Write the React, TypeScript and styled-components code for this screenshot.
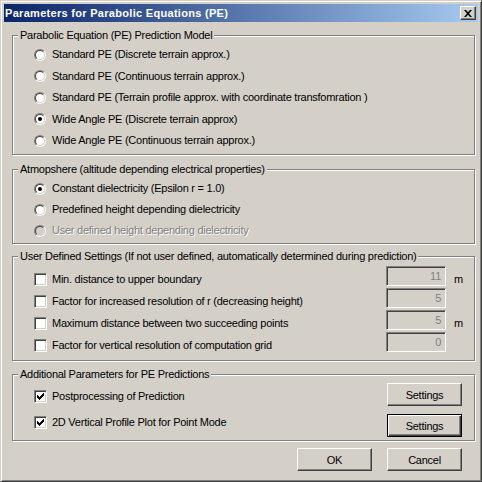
import React from 'react';
import styled, { createGlobalStyle, css } from 'styled-components';

const FACE = '#d4d0c8';
const SHADOW = '#808080';
const DARK = '#404040';

const GlobalStyle = createGlobalStyle`
  html, body { margin: 0; padding: 0; background: ${FACE}; }
  body {
    font-family: 'Liberation Sans', Arial, sans-serif;
    font-size: 11px;
    letter-spacing: -0.25px;
    color: #000;
  }
`;

const Window = styled.div`
  box-sizing: border-box;
  width: 482px;
  height: 482px;
  padding: 3px;
  background: ${FACE};
  border: 1px solid;
  border-color: ${FACE} ${DARK} ${DARK} ${FACE};
  box-shadow: inset 1px 1px 0 #fff, inset -1px -1px 0 ${SHADOW};
  display: flex;
  flex-direction: column;
`;

const TitleBar = styled.div`
  height: 18px;
  flex: none;
  display: flex;
  align-items: center;
  justify-content: space-between;
  padding: 0 2px 0 1px;
  background: linear-gradient(to right, #0a246a, #a6caf0);
`;

const TitleText = styled.span`
  color: #fff;
  font-weight: bold;
  font-size: 11px;
  letter-spacing: 0.3px;
  white-space: nowrap;
`;

const CloseButton = styled.div`
  box-sizing: border-box;
  width: 16px;
  height: 14px;
  background: ${FACE};
  border: 1px solid;
  border-color: #fff ${DARK} ${DARK} #fff;
  box-shadow: inset -1px -1px 0 ${SHADOW};
  display: flex;
  align-items: center;
  justify-content: center;
`;

const Client = styled.div`
  flex: 1;
  display: flex;
  flex-direction: column;
  padding: 0 3px 0 8px;
`;

const Group = styled.div<{ $pad: string; $gap: number }>`
  position: relative;
  margin-top: ${(p) => p.$gap}px;
  padding: ${(p) => p.$pad};
  border: 1px solid ${SHADOW};
  box-shadow: inset 1px 1px 0 #fff, 1px 1px 0 #fff;
  display: flex;
  flex-direction: column;
`;

const Legend = styled.span`
  position: absolute;
  top: -7px;
  left: 5px;
  padding: 0 2px;
  line-height: 13px;
  background: ${FACE};
  white-space: nowrap;
`;

const Row = styled.div<{ $h: number }>`
  height: ${(p) => p.$h}px;
  display: flex;
  align-items: center;
`;

const Label = styled.span<{ $disabled?: boolean }>`
  line-height: 13px;
  white-space: nowrap;
  ${(p) =>
    p.$disabled &&
    css`
      color: ${SHADOW};
      text-shadow: 1px 1px 0 #fff;
    `}
`;

const RadioOuter = styled.span`
  box-sizing: border-box;
  flex: none;
  width: 12px;
  height: 12px;
  margin-right: 6px;
  border-radius: 50%;
  border: 1px solid;
  border-color: ${SHADOW} #fff #fff ${SHADOW};
  display: flex;
  align-items: center;
  justify-content: center;
`;

const RadioInner = styled.span<{ $disabled?: boolean }>`
  box-sizing: border-box;
  width: 10px;
  height: 10px;
  border-radius: 50%;
  border: 1px solid;
  border-color: ${DARK} ${FACE} ${FACE} ${DARK};
  background: ${(p) => (p.$disabled ? FACE : '#fff')};
  display: flex;
  align-items: center;
  justify-content: center;
`;

const RadioDot = styled.span`
  width: 4px;
  height: 4px;
  border-radius: 50%;
  background: #000;
`;

const CheckBox = styled.span`
  box-sizing: border-box;
  flex: none;
  width: 13px;
  height: 13px;
  margin-right: 5px;
  border: 1px solid;
  border-color: ${SHADOW} #fff #fff ${SHADOW};
  box-shadow: inset 1px 1px 0 ${DARK}, inset -1px -1px 0 ${FACE};
  background: #fff;
  display: flex;
  align-items: center;
  justify-content: center;
`;

const Spacer = styled.span`
  flex: 1;
`;

const Edit = styled.div`
  box-sizing: border-box;
  flex: none;
  width: 60px;
  height: 20px;
  margin-bottom: 6px;
  padding: 0 4px;
  border: 1px solid;
  border-color: ${SHADOW} #fff #fff ${SHADOW};
  box-shadow: inset 1px 1px 0 ${DARK}, inset -1px -1px 0 ${FACE};
  background: ${FACE};
  color: ${SHADOW};
  text-align: right;
  line-height: 18px;
`;

const Unit = styled.span`
  flex: none;
  width: 28px;
  padding-left: 8px;
  box-sizing: border-box;
`;

const ButtonRow = styled.div`
  display: flex;
  align-items: flex-start;
`;

const Option = styled.div<{ $top: number }>`
  display: flex;
  align-items: center;
  padding-top: ${(p) => p.$top}px;
`;

const PushButton = styled.button<{ $default?: boolean }>`
  box-sizing: border-box;
  flex: none;
  width: 75px;
  height: 23px;
  padding: 0;
  font: inherit;
  letter-spacing: inherit;
  color: #000;
  background: ${FACE};
  border: 1px solid;
  border-color: #fff ${DARK} ${DARK} #fff;
  box-shadow: inset -1px -1px 0 ${SHADOW};
  ${(p) =>
    p.$default &&
    css`
      border-color: #000;
      box-shadow: inset 1px 1px 0 #fff, inset -1px -1px 0 ${DARK}, inset -2px -2px 0 ${SHADOW};
    `}
`;

const CheckRows = styled.div`
  display: flex;
  flex-direction: column;
  gap: 8px;
`;

const Footer = styled.div`
  display: flex;
  justify-content: flex-end;
  gap: 15px;
  margin-top: 7px;
  padding-right: 13px;
`;

function Radio({ label, checked, disabled }: { label: string; checked?: boolean; disabled?: boolean }) {
  return (
    <>
      <RadioOuter>
        <RadioInner $disabled={disabled}>{checked && <RadioDot />}</RadioInner>
      </RadioOuter>
      <Label $disabled={disabled}>{label}</Label>
    </>
  );
}

function Check({ checked }: { checked?: boolean }) {
  return (
    <CheckBox>
      {checked && (
        <svg width="7" height="7" viewBox="0 0 7 7" shapeRendering="crispEdges">
          <path
            d="M6 0h1v1h-1zM5 1h2v1h-2zM0 2h1v1h-1zM4 2h3v1h-3zM0 3h2v1h-2zM3 3h3v1h-3zM0 4h5v1h-5zM1 5h3v1h-3zM2 6h1v1h-1z"
            fill="#000"
          />
        </svg>
      )}
    </CheckBox>
  );
}

const models = [
  { label: 'Standard PE (Discrete terrain approx.)' },
  { label: 'Standard PE (Continuous terrain approx.)' },
  { label: 'Standard PE (Terrain profile approx. with coordinate transfomration )' },
  { label: 'Wide Angle PE (Discrete terrain approx)', checked: true },
  { label: 'Wide Angle PE (Continuous terrain approx.)' },
];

const atmosphere = [
  { label: 'Constant dielectricity (Epsilon r = 1.0)', checked: true },
  { label: 'Predefined height depending dielectricity' },
  { label: 'User defined height depending dielectricity', disabled: true },
];

const userSettings = [
  { label: 'Min. distance to upper boundary', value: '11', unit: 'm' },
  { label: 'Factor for increased resolution of r (decreasing height)', value: '5', unit: '' },
  { label: 'Maximum distance between two succeeding points', value: '5', unit: 'm' },
  { label: 'Factor for vertical resolution of computation grid', value: '0', unit: '' },
];

export default function App() {
  return (
    <>
      <GlobalStyle />
      <Window>
        <TitleBar>
          <TitleText>Parameters for Parabolic Equations (PE)</TitleText>
          <CloseButton>
            <svg width="8" height="7" viewBox="0 0 8 7">
              <path d="M0 0h2l2 2.2L6 0h2L5 3.5 8 7H6L4 4.8 2 7H0l3-3.5z" fill="#000" />
            </svg>
          </CloseButton>
        </TitleBar>
        <Client>
          <Group $gap={13} $pad="8px 0 2.5px 21px">
            <Legend>Parabolic Equation (PE) Prediction Model</Legend>
            {models.map((m) => (
              <Row key={m.label} $h={21.5}>
                <Radio label={m.label} checked={m.checked} />
              </Row>
            ))}
          </Group>

          <Group $gap={14} $pad="8px 0 2px 21px">
            <Legend>Atmopshere (altitude depending electrical properties)</Legend>
            {atmosphere.map((a) => (
              <Row key={a.label} $h={21}>
                <Radio label={a.label} checked={a.checked} disabled={a.disabled} />
              </Row>
            ))}
          </Group>

          <Group $gap={12} $pad="11px 0 4px 21px">
            <Legend>User Defined Settings (If not user defined, automatically determined during prediction)</Legend>
            {userSettings.map((s) => (
              <Row key={s.label} $h={22}>
                <Check />
                <Label>{s.label}</Label>
                <Spacer />
                <Edit>{s.value}</Edit>
                <Unit>{s.unit}</Unit>
              </Row>
            ))}
          </Group>

          <Group $gap={13} $pad="8px 12px 3px 21px">
            <Legend>Additional Parameters for PE Predictions</Legend>
            <CheckRows>
              <ButtonRow>
                <Option $top={7}>
                  <Check checked />
                  <Label>Postprocessing of Prediction</Label>
                </Option>
                <Spacer />
                <PushButton>Settings</PushButton>
              </ButtonRow>
              <ButtonRow>
                <Option $top={2}>
                  <Check checked />
                  <Label>2D Vertical Profile Plot for Point Mode</Label>
                </Option>
                <Spacer />
                <PushButton $default>Settings</PushButton>
              </ButtonRow>
            </CheckRows>
          </Group>

          <Footer>
            <PushButton>OK</PushButton>
            <PushButton>Cancel</PushButton>
          </Footer>
        </Client>
      </Window>
    </>
  );
}
